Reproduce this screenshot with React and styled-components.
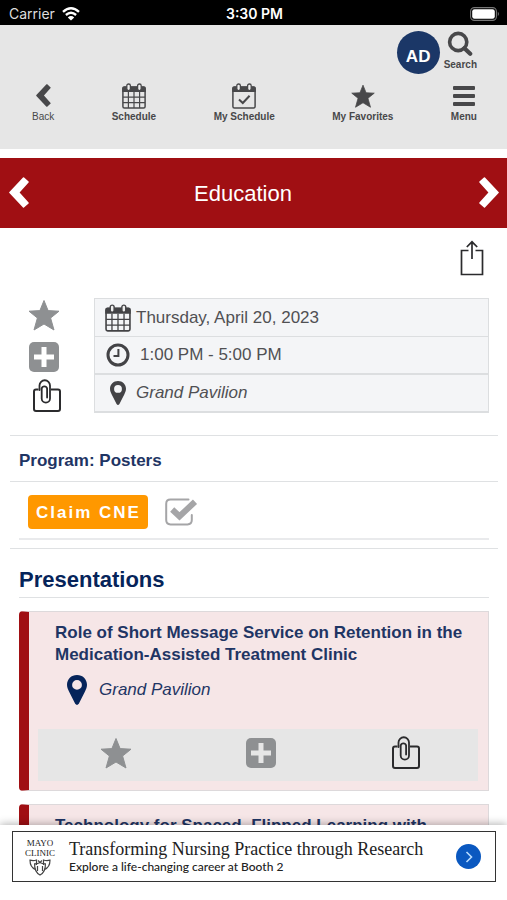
import { useState } from "react";
import styled, { createGlobalStyle, css } from "styled-components";

const CalendarIcon = ({ size = 26, checked }) => (
  <svg width={size} height={size} viewBox="0 0 26 26" fill="none" aria-hidden="true">
    <rect x="1.9" y="4" width="22.2" height="21" rx="1.5" stroke="currentColor" strokeWidth="1.5" />
    <path d="M1.2 9V5.5Q1.2 3.5 3.2 3.5H22.8Q24.8 3.5 24.8 5.5V9Z" fill="currentColor" />
    {checked ? (
      <path d="M8 16.5L11.8 20L18.6 12.8" stroke="currentColor" strokeWidth="2" />
    ) : (
      <path
        d="M7.4 9V25M13 9V25M18.6 9V25M2 14.2H24M2 19.6H24"
        stroke="currentColor"
        strokeWidth="1.2"
      />
    )}
    <rect x="5.8" y="1" width="3.6" height="6.6" rx="1.8" fill="#eee" stroke="currentColor" strokeWidth="1.3" />
    <rect x="16.6" y="1" width="3.6" height="6.6" rx="1.8" fill="#eee" stroke="currentColor" strokeWidth="1.3" />
  </svg>
);

const ChevronIcon = ({ width, height, right }) => (
  <svg width={width} height={height} viewBox="0 0 20 31" fill="currentColor" aria-hidden="true">
    <path
      d={
        right
          ? "M4.9 .4Q5.500 0 6 .5L19.600 14.900Q20.200 15.500 19.600 16.100L6 30.500Q5.500 31 5 30.500L.4 26.400Q0 26 .4 25.500L9.400 15.500L.4 5.500Q0 5 .4 4.600Z"
          : "M15.100 .4Q14.500 0 14 .5L.4 14.900Q-.2 15.500 .4 16.100L14 30.500Q14.500 31 15 30.500L19.600 26.400Q20 26 19.600 25.500L10.600 15.500L19.600 5.500Q20 5 19.600 4.600Z"
      }
    />
  </svg>
);

const StarIcon = ({ size = 32 }) => (
  <svg width={size} height={size} viewBox="0 0 32 32" fill="currentColor" aria-hidden="true">
    <path
      d="M16 1.5L20.1 11.600L31 12.200L22.600 19L26 31L16 25L6 31L9.400 19L1 12.200L11.900 11.600Z"
      stroke="currentColor"
      strokeWidth="1"
      strokeLinejoin="round"
    />
  </svg>
);

const PlusIcon = ({ cross = "#fff" }) => (
  <svg width="30" height="30" viewBox="0 0 30 30" aria-hidden="true">
    <rect width="30" height="30" rx="5" fill="currentColor" />
    <path
      d="M15 7.500V22.500M7.500 15H22.500"
      stroke={cross}
      strokeWidth="5"
      strokeLinecap="square"
    />
  </svg>
);

const NotesIcon = () => (
  <svg width="28" height="34" viewBox="0 0 28 34" fill="none" stroke="#2b2b2d" strokeWidth="2" aria-hidden="true">
    <path d="M5.5 10.5H3Q1 10.5 1 12.5V30Q1 32 3 32H25Q27 32 27 30V12.5Q27 10.5 25 10.5H18" />
    <path
      d="M6.500 11V6.500A5.250 5.250 0 0 1 17 6.500V19.500A4.150 4.150 0 0 1 8.700 19.500V9.500A2.800 2.800 0 0 1 14.100 9.500V18.500"
      strokeWidth="1.8"
      strokeLinecap="round"
    />
  </svg>
);

const PinIcon = ({ width, height }) => (
  <svg width={width} height={height} viewBox="0 0 20 30" fill="currentColor" aria-hidden="true">
    <path
      fillRule="evenodd"
      d="M10 0C4.3 0 0 4.2 0 9.8C0 12.4 .9 14.2 2 16.5L8.2 28.8Q10 31 11.8 28.8L18 16.5C19.1 14.2 20 12.4 20 9.8C20 4.2 15.7 0 10 0ZM10 5A4.9 4.9 0 1 1 10 14.8A4.9 4.9 0 1 1 10 5Z"
    />
  </svg>
);

const ClockIcon = () => (
  <svg width="24" height="24" viewBox="0 0 24 24" fill="none" stroke="currentColor" aria-hidden="true">
    <circle cx="12" cy="12" r="10" strokeWidth="3" />
    <path d="M12.4 6V13H7.5" strokeWidth="2" />
  </svg>
);

const SearchIcon = () => (
  <svg width="26" height="26" viewBox="0 0 26 26" fill="none" stroke="currentColor" aria-hidden="true">
    <circle cx="11.2" cy="11" r="8.6" strokeWidth="3.6" />
    <path d="M17.4 17.2L23.2 22.8" strokeWidth="4.2" strokeLinecap="round" />
  </svg>
);

const ShareIcon = () => (
  <svg width="24" height="36" viewBox="0 0 24 36" fill="none" stroke="#2b2b2d" strokeWidth="1.7" aria-hidden="true">
    <path d="M8.5 10.5H1.5V34.5H22.5V10.5H15.5M12 19V2M6.8 7L12 1.8L17.2 7" />
  </svg>
);

const CheckIcon = () => (
  <svg width="33" height="28" viewBox="0 0 33 28" fill="none" stroke="currentColor" aria-hidden="true">
    <path
      d="M23.5 1.600H5.500Q1.200 1.600 1.200 5.900V22.100Q1.200 26.400 5.500 26.400H22.500Q26.800 26.400 26.800 22.100V17"
      strokeWidth="2"
      strokeLinecap="round"
    />
    <path d="M7.200 11.500L14.500 18.300L30 3.800" strokeWidth="6" />
  </svg>
);

const WifiIcon = () => (
  <svg width="18" height="14" viewBox="0 0 18 14" fill="none" stroke="#fff" strokeWidth="2.4" aria-hidden="true">
    <path d="M1 4.8Q9 -2.2 17 4.8M3.9 8Q9 3.6 14.1 8" />
    <path d="M9 13.6L5.8 10.4Q9 7.8 12.2 10.4Z" fill="#fff" stroke="none" />
  </svg>
);

const BatteryIcon = () => (
  <svg width="30" height="14" viewBox="0 0 30 14" aria-hidden="true">
    <rect x=".6" y=".6" width="25.8" height="12.8" rx="3.8" fill="none" stroke="#777" strokeWidth="1.1" />
    <rect x="2.2" y="2.2" width="22.6" height="9.6" rx="2.3" fill="#fff" />
    <path d="M27.8 4.8Q30 7 27.8 9.2Z" fill="#777" />
  </svg>
);

const ShieldsIcon = () => (
  <svg width="22" height="17" viewBox="0 0 22 17" fill="none" stroke="#444" strokeWidth="1.2" aria-hidden="true">
    <path d="M6.5 10.5C3 9 1 6 1 1.2Q4.5 2 7.5 1V6M15.5 10.5C19 9 21 6 21 1.2Q17.5 2 14.5 1V6" />
    <path d="M5.6 4.8Q8.5 5 11 3.5Q13.5 5 16.4 4.8C16.6 10.5 14.5 14.3 11 16C7.5 14.3 5.4 10.5 5.6 4.8Z" />
    <path d="M9 1.5L11 3.5L13 1.5M8.5 7V12M13.5 7V12" />
  </svg>
);

const details = [
  { id: "date", icon: <CalendarIcon size={28} />, text: "Thursday, April 20, 2023" },
  { id: "time", icon: <ClockIcon />, text: "1:00 PM - 5:00 PM", indent: true },
  { id: "place", icon: <PinIcon width={16} height={24} />, text: "Grand Pavilion", italic: true },
];

const presentations = [
  {
    title: "Role of Short Message Service on Retention in the Medication-Assisted Treatment Clinic",
    place: "Grand Pavilion",
  },
  { title: "Technology for Spaced, Flipped Learning with" },
];

const App = () => {
  const [claimed, setClaimed] = useState(true);

  return (
    <Page>
      <GlobalStyle />
      <StatusBar>
        <Carrier>
          Carrier <WifiIcon />
        </Carrier>
        <Clock>3:30 PM</Clock>
        <Battery>
          <BatteryIcon />
        </Battery>
      </StatusBar>

      <Header>
        <UserRow>
          <Avatar>AD</Avatar>
          <NavButton>
            <SearchIcon />
            Search
          </NavButton>
        </UserRow>
        <Nav>
          <NavButton $light>
            <NavIcon>
              <ChevronIcon width={15} height={23} />
            </NavIcon>
            Back
          </NavButton>
          <NavButton>
            <NavIcon>
              <CalendarIcon />
            </NavIcon>
            Schedule
          </NavButton>
          <NavButton>
            <NavIcon>
              <CalendarIcon checked />
            </NavIcon>
            My Schedule
          </NavButton>
          <NavButton>
            <NavIcon>
              <StarIcon size={24} />
            </NavIcon>
            My Favorites
          </NavButton>
          <NavButton>
            <NavIcon>
              <svg width="24" height="20" viewBox="0 0 24 20" fill="currentColor" aria-hidden="true">
                <rect x="1" y="0" width="22" height="4" rx="1" />
                <rect x="1" y="8" width="22" height="4" rx="1" />
                <rect x="1" y="16" width="22" height="4" rx="1" />
              </svg>
            </NavIcon>
            Menu
          </NavButton>
        </Nav>
      </Header>

      <Main>
        <Banner>
          <IconButton aria-label="Previous">
            <ChevronIcon width={20} height={31} />
          </IconButton>
          <BannerTitle>Education</BannerTitle>
          <IconButton aria-label="Next">
            <ChevronIcon width={20} height={31} right />
          </IconButton>
        </Banner>

        <ShareRow>
          <IconButton aria-label="Share">
            <ShareIcon />
          </IconButton>
        </ShareRow>

        <SessionInfo>
          <SideActions>
            <IconButton aria-label="Favorite">
              <StarIcon />
            </IconButton>
            <IconButton aria-label="Add to schedule">
              <PlusIcon />
            </IconButton>
            <NotesButton aria-label="Notes">
              <NotesIcon />
            </NotesButton>
          </SideActions>
          <DetailList>
            {details.map((item) => (
              <DetailItem key={item.id}>
                <DetailIcon>{item.icon}</DetailIcon>
                <DetailText $italic={item.italic} $indent={item.indent}>
                  {item.text}
                </DetailText>
              </DetailItem>
            ))}
          </DetailList>
        </SessionInfo>

        <Program>Program: Posters</Program>

        <ClaimSection>
          <ClaimRow>
            <ClaimButton>Claim CNE</ClaimButton>
            <CheckLabel>
              <HiddenCheckbox
                type="checkbox"
                aria-label="Claimed"
                checked={claimed}
                onChange={(e) => setClaimed(e.target.checked)}
              />
              <CheckIcon />
            </CheckLabel>
          </ClaimRow>
        </ClaimSection>

        <Presentations>
          <SectionTitle>Presentations</SectionTitle>
          {presentations.map((item) => (
            <Card key={item.title}>
              <CardTitle>{item.title}</CardTitle>
              {item.place && (
                <Place>
                  <PinIcon width={20} height={30} />
                  {item.place}
                </Place>
              )}
              <CardActions>
                <IconButton aria-label="Favorite">
                  <StarIcon />
                </IconButton>
                <IconButton aria-label="Add to schedule">
                  <PlusIcon cross="#e6e6e6" />
                </IconButton>
                <IconButton aria-label="Notes">
                  <NotesIcon />
                </IconButton>
              </CardActions>
            </Card>
          ))}
        </Presentations>
      </Main>

      <Footer>
        <Ad href="#">
          <AdLogo>
            <span>MAYO</span>
            <span>CLINIC</span>
            <ShieldsIcon />
          </AdLogo>
          <AdCopy>
            <AdTitle>Transforming Nursing Practice through Research</AdTitle>
            <AdText>Explore a life-changing career at Booth 2</AdText>
          </AdCopy>
          <AdArrow>
            <svg width="8" height="12" viewBox="0 0 8 12" fill="none" stroke="#b9dcff" strokeWidth="1.6" aria-hidden="true">
              <path d="M1.5 1L6.5 6L1.5 11" />
            </svg>
          </AdArrow>
        </Ad>
      </Footer>
    </Page>
  );
};

export default App;

// Styled Components

const GlobalStyle = createGlobalStyle`
  * {
    box-sizing: border-box;
  }

  body {
    margin: 0;
    background: #fff;
    font-family: "Liberation Sans", Arial, sans-serif;
  }

  button {
    font-family: inherit;
    cursor: pointer;
  }

  svg {
    display: block;
    flex-shrink: 0;
  }
`;

const Page = styled.div`
  display: flex;
  flex-direction: column;
  height: 100vh;
  overflow: hidden;
`;

const StatusBar = styled.div`
  display: grid;
  grid-template-columns: 1fr auto 1fr;
  align-items: center;
  flex-shrink: 0;
  height: 25px;
  padding: 2px 7px 0 9px;
  background: #000;
  color: #fff;
  font-family: Inter, sans-serif;
  font-size: 14px;
`;

const Carrier = styled.div`
  display: flex;
  align-items: center;
  gap: 7px;
  color: #ddd;
`;

const Clock = styled.div`
  font-weight: 600;
`;

const Battery = styled.div`
  display: flex;
  justify-content: flex-end;
`;

const Header = styled.header`
  flex-shrink: 0;
  height: 124px;
  padding: 6px 30px 0 32px;
  background: #e6e6e6;
`;

const UserRow = styled.div`
  display: flex;
  align-items: flex-start;
  justify-content: flex-end;
  gap: 4px;
  height: 51px;
`;

const Avatar = styled.div`
  width: 43px;
  height: 43px;
  padding-top: 7px;
  border-radius: 50%;
  background: #1b3767;
  color: #fff;
  font-size: 17px;
  font-weight: bold;
  line-height: 38px;
  text-align: center;
`;

const Nav = styled.nav`
  display: flex;
  justify-content: space-between;
`;

const NavButton = styled.button`
  display: flex;
  flex-direction: column;
  align-items: center;
  gap: 2px;
  padding: 0;
  border: none;
  background: none;
  color: #48484a;
  font-size: 10px;
  font-weight: ${(props) => (props.$light ? "normal" : "bold")};
  line-height: 12px;
`;

const NavIcon = styled.span`
  display: flex;
  align-items: center;
  height: 27px;
`;

const Main = styled.main`
  flex: 1;
  min-height: 0;
  padding-top: 9px;
  overflow-y: auto;
  scrollbar-width: none;
`;

const Banner = styled.div`
  display: flex;
  align-items: center;
  justify-content: space-between;
  height: 70px;
  padding: 0 8px 2px 9px;
  background: #a00f13;
  color: #fff;
`;

const BannerTitle = styled.h1`
  margin: 0;
  padding: 4px 22px 0 0;
  font-size: 22px;
  font-weight: normal;
  line-height: 26px;
`;

const IconButton = styled.button`
  display: flex;
  align-items: center;
  justify-content: center;
  padding: 0;
  border: none;
  background: none;
  color: inherit;
`;

const ShareRow = styled.div`
  display: flex;
  justify-content: flex-end;
  padding: 12px 23px 22px;
`;

const SessionInfo = styled.section`
  display: flex;
  gap: 34px;
  padding: 0 18px 22px 28px;
`;

const SideActions = styled.div`
  display: flex;
  flex-direction: column;
  align-items: center;
  width: 32px;
  gap: 7px;
  padding-top: 1px;
  color: #8e9092;

  ${IconButton}:nth-child(2) {
    padding-top: 4px;
  }
`;

const NotesButton = styled(IconButton)`
  padding-left: 6px;
`;

const DetailList = styled.ul`
  flex: 1;
  margin: 0;
  padding: 0;
  border: 1px solid #dcdee0;
  border-bottom-width: 2px;
  background: #f4f5f7;
  list-style: none;
`;

const DetailItem = styled.li`
  display: flex;
  align-items: center;
  height: 37px;
  padding-left: 9px;
  color: #434346;

  & + & {
    border-top: 1px solid #dcdee0;
  }

  &:last-child {
    height: 38px;
    border-top-width: 2px;
  }
`;

const DetailIcon = styled.span`
  display: flex;
  justify-content: center;
  width: 28px;
`;

const DetailText = styled.span`
  padding-left: ${(props) => (props.$indent ? "8px" : "4px")};
  color: #505053;
  font-size: 17px;
  font-style: ${(props) => (props.$italic ? "italic" : "normal")};
  line-height: 22px;
`;

const ruled = css`
  margin: 0 9px 0 10px;
  border-top: 1px solid #dfe1e3;
`;

const Program = styled.h2`
  ${ruled}
  padding: 14px 9px 9px;
  color: #1f3564;
  font-size: 17px;
  line-height: 22px;
`;

const ClaimSection = styled.section`
  ${ruled}
  padding: 0 9px 8px;
`;

const ClaimRow = styled.div`
  display: flex;
  align-items: center;
  gap: 17px;
  padding: 13px 9px 9px;
  border-bottom: 2px solid #e9eaec;
`;

const ClaimButton = styled.button`
  height: 34px;
  padding: 2px 7px 0 8px;
  border: none;
  border-radius: 4px;
  background: #ff9800;
  color: #fff;
  font-size: 17px;
  font-weight: bold;
  letter-spacing: 2px;
`;

const CheckLabel = styled.label`
  display: flex;
  color: #a5a5a7;
  cursor: pointer;
`;

const HiddenCheckbox = styled.input`
  width: 0;
  height: 0;
  margin: 0;
  appearance: none;
`;

const Presentations = styled.section`
  ${ruled}
  padding: 0 9px;
`;

const SectionTitle = styled.h2`
  margin: 0 0 13px;
  padding: 18px 0 4px;
  border-bottom: 1px solid #dfe1e3;
  color: #06245a;
  font-size: 22px;
  line-height: 26px;
`;

const Card = styled.article`
  margin-bottom: 13px;
  padding: 10px 10px 9px 9px;
  border: 1px solid #ddd9db;
  border-left: 10px solid #a00f13;
  border-radius: 4px 0 0 4px;
  background: #f6e6e7;
`;

const CardTitle = styled.h3`
  margin: 0;
  padding: 0 0 0 17px;
  color: #1f3564;
  font-size: 17px;
  line-height: 22px;
`;

const Place = styled.p`
  display: flex;
  align-items: center;
  gap: 12px;
  margin: 0;
  padding: 9px 0 24px 29px;
  color: #1f3564;
  font-size: 17px;
  font-style: italic;
  line-height: 22px;

  svg {
    color: #06245a;
  }
`;

const CardActions = styled.div`
  display: grid;
  grid-template-columns: repeat(3, 1fr);
  height: 52px;
  padding: 0 0 4px 5px;
  background: #e6e6e6;
  color: #8e9092;
`;

const Footer = styled.footer`
  z-index: 1;
  flex-shrink: 0;
  padding: 6px 11px 18px 12px;
  background: #fff;
  box-shadow: 0 -1px 8px rgba(0, 0, 0, 0.3);
`;

const Ad = styled.a`
  display: flex;
  align-items: center;
  height: 51px;
  padding: 0 14px 0 10px;
  border: 1px solid #333;
  color: #222;
  text-decoration: none;
`;

const AdLogo = styled.div`
  display: flex;
  flex-direction: column;
  align-items: center;
  width: 34px;
  font-family: "Liberation Serif", serif;
  font-size: 9px;
  line-height: 10px;

  svg {
    margin-top: 1px;
  }
`;

const AdCopy = styled.div`
  flex: 1;
  padding-left: 12px;
`;

const AdTitle = styled.div`
  font-family: "Liberation Serif", serif;
  font-size: 18px;
  line-height: 20px;
  white-space: nowrap;
`;

const AdText = styled.div`
  font-family: Lato, sans-serif;
  font-size: 12px;
  font-weight: 500;
  line-height: 16px;
  white-space: nowrap;
`;

const AdArrow = styled.span`
  display: flex;
  align-items: center;
  justify-content: center;
  width: 25px;
  height: 25px;
  border-radius: 50%;
  background: #0a58c0;
`;
